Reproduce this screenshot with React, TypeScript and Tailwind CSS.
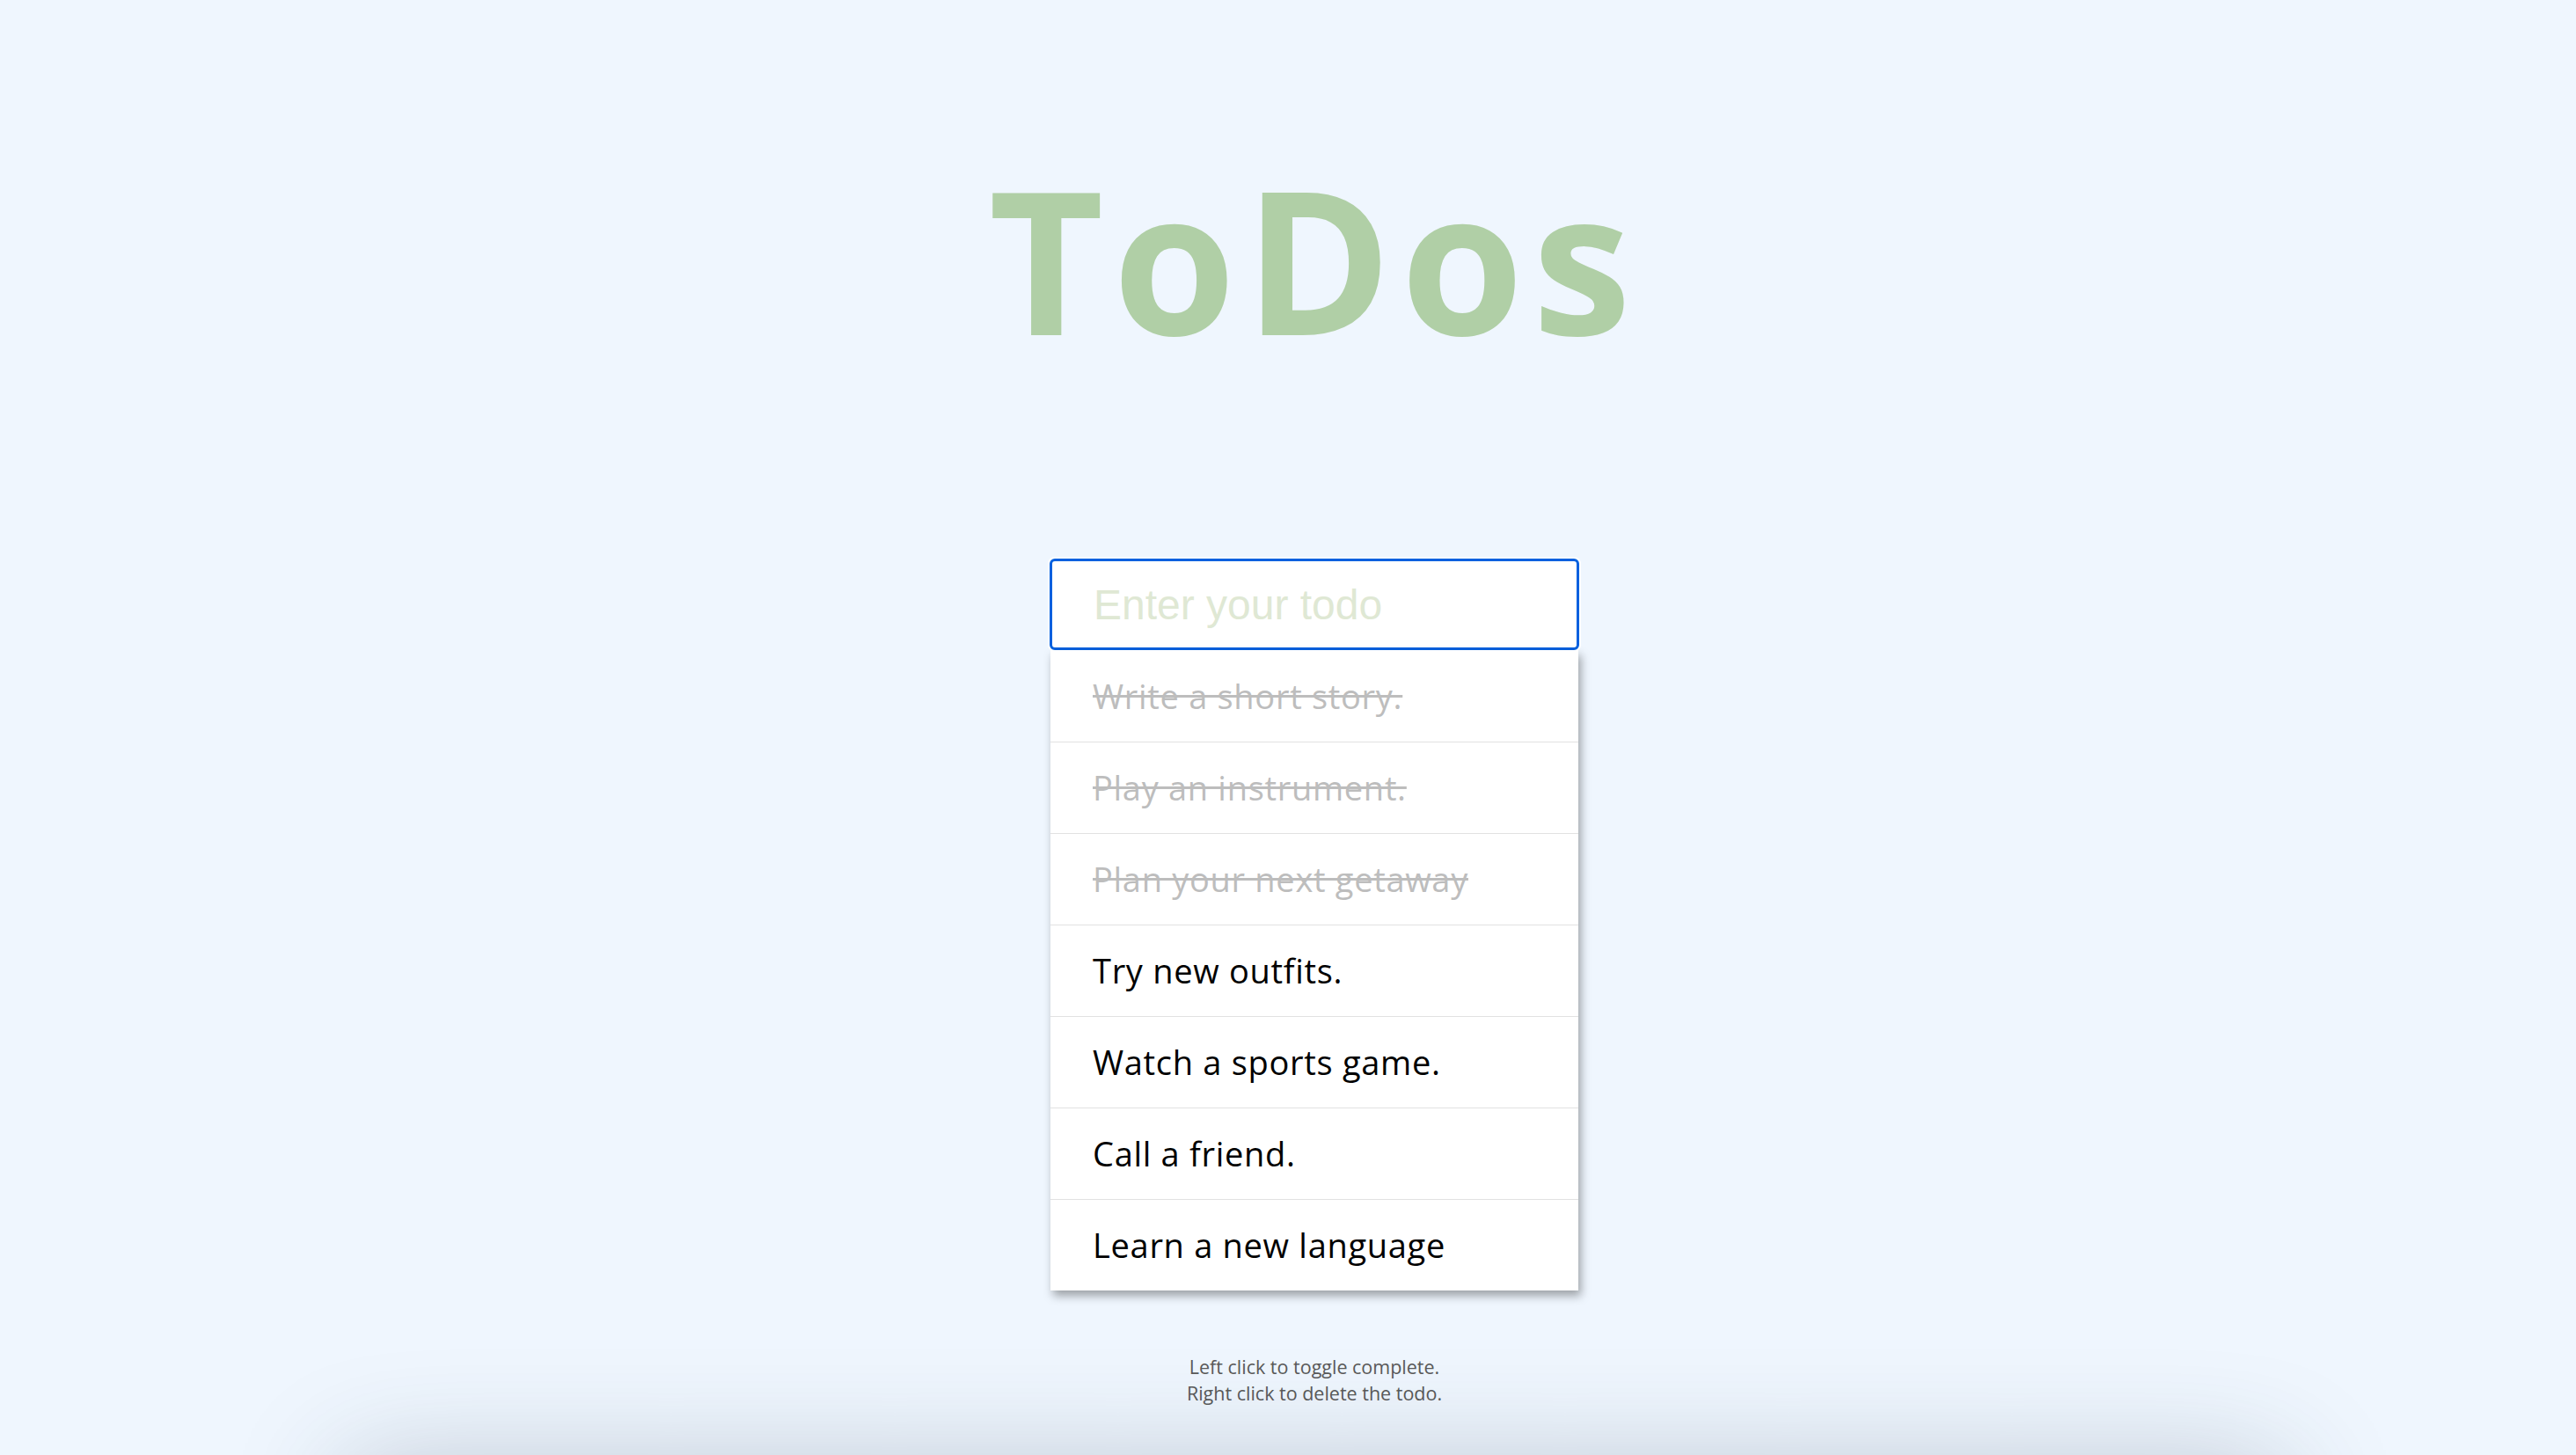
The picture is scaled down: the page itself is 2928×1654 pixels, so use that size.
import { useState } from "react";

type Todo = { text: string; done: boolean };

const initialTodos: Todo[] = [
  { text: "Write a short story.", done: true },
  { text: "Play an instrument.", done: true },
  { text: "Plan your next getaway", done: true },
  { text: "Try new outfits.", done: false },
  { text: "Watch a sports game.", done: false },
  { text: "Call a friend.", done: false },
  { text: "Learn a new language", done: false },
];

export default function App() {
  const [todos, setTodos] = useState<Todo[]>(initialTodos);
  const [value, setValue] = useState("");

  const toggle = (index: number) => {
    setTodos(todos.map((t, i) => (i === index ? { ...t, done: !t.done } : t)));
  };

  const remove = (event: React.MouseEvent, index: number) => {
    event.preventDefault();
    setTodos(todos.filter((_, i) => i !== index));
  };

  const handleSubmit = (event: React.FormEvent<HTMLFormElement>) => {
    event.preventDefault();
    if (!value.trim()) return;
    setTodos([...todos, { text: value.trim(), done: false }]);
    setValue("");
  };

  return (
    <div className="h-screen overflow-hidden bg-[#eff6fe] pl-[60px] flex flex-col items-center font-['Open_Sans',sans-serif]">
      <h1 className="shrink-0 mt-[180px] h-[226px] text-[226px] leading-none font-bold tracking-[10px] text-[#b0cfa6]">
        ToDos
      </h1>

      <form onSubmit={handleSubmit} className="shrink-0 mt-[229px] w-[602px]">
        <input
          value={value}
          onChange={(e) => setValue(e.target.value)}
          placeholder="Enter your todo"
          className="block w-full h-[104px] rounded-[6px] border-[3px] border-[#0060df] bg-white pl-[47px] font-['Liberation_Sans',Arial,sans-serif] text-[48px] text-black outline-none shadow-[0_0_0_2px_#ffffff] placeholder:text-[#dfe8d4]"
        />
        <ul className="mx-px bg-white shadow-[3px_6px_10px_rgba(0,0,0,0.35)]">
          {todos.map((todo, i) => (
            <li
              key={todo.text}
              onClick={() => toggle(i)}
              onContextMenu={(e) => remove(e, i)}
              className={`flex h-[104px] cursor-pointer items-center pl-[48px] text-[38px] tracking-[0.7px] ${
                i > 0 ? "border-t border-[#e2e2e2]" : ""
              } ${todo.done ? "text-[#bdbdbd] line-through" : "text-black"}`}
            >
              {todo.text}
            </li>
          ))}
        </ul>
      </form>

      <p className="shrink-0 mt-[72px] text-center text-[21.5px] leading-[29.5px] text-[#5a5a5a]">
        Left click to toggle complete.
        <br />
        Right click to delete the todo.
      </p>

      <div className="shrink-0 mt-[72px] w-[2200px] h-[300px] bg-[#eff6fe] shadow-[0_0_130px_rgba(40,60,80,0.28)]" />
    </div>
  );
}
